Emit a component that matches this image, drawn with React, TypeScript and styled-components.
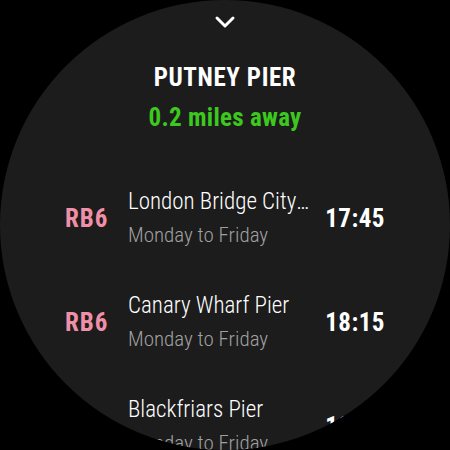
import styled, { createGlobalStyle } from 'styled-components';

const GlobalStyle = createGlobalStyle`
  html, body {
    margin: 0;
    padding: 0;
    background: #000;
  }
  body {
    font-family: "Roboto Condensed", "Liberation Sans Narrow", Roboto, sans-serif;
  }
`;

const Screen = styled.div`
  width: 450px;
  height: 450px;
  border-radius: 50%;
  background: #1c1c1c;
  overflow: hidden;
  display: flex;
  flex-direction: column;
  align-items: center;
`;

const Chevron = styled.div`
  margin-top: 15px;
  height: 18px;
  display: flex;
  justify-content: center;
  svg {
    width: 22px;
    height: 14px;
  }
`;

const Header = styled.div`
  margin-top: 34px;
  display: flex;
  flex-direction: column;
  align-items: center;
  gap: 10px;
`;

const Title = styled.h1`
  margin: 0;
  font-size: 25px;
  font-weight: 700;
  letter-spacing: 0.6px;
  color: #fff;
  line-height: 30px;
`;

const Distance = styled.div`
  font-size: 25px;
  font-weight: 700;
  letter-spacing: 0.3px;
  color: #3cc81e;
  line-height: 30px;
`;

const List = styled.div`
  margin-top: 53px;
  width: 320px;
  display: flex;
  flex-direction: column;
  gap: 40px;
`;

const Row = styled.div`
  display: grid;
  grid-template-columns: 63px 1fr auto;
  align-items: center;
  height: 64px;
`;

const Code = styled.span`
  font-size: 25px;
  font-weight: 700;
  letter-spacing: 1px;
  color: #f08fa8;
`;

const Info = styled.div`
  display: flex;
  flex-direction: column;
  gap: 8px;
  min-width: 0;
  padding-right: 13px;
`;

const Name = styled.span`
  font-size: 23px;
  font-weight: 300;
  color: #fff;
  white-space: nowrap;
  overflow: hidden;
  text-overflow: ellipsis;
  line-height: 27px;
`;

const Days = styled.span`
  font-size: 21px;
  font-weight: 300;
  color: #a0a0a0;
  line-height: 25px;
`;

const Time = styled.span`
  font-size: 25px;
  font-weight: 700;
  letter-spacing: 0.5px;
  color: #fff;
`;

const departures = [
  { code: 'RB6', name: 'London Bridge City Pier', days: 'Monday to Friday', time: '17:45' },
  { code: 'RB6', name: 'Canary Wharf Pier', days: 'Monday to Friday', time: '18:15' },
  { code: 'RB6', name: 'Blackfriars Pier', days: 'Monday to Friday', time: '18:45' },
];

function App() {
  return (
    <>
      <GlobalStyle />
      <Screen>
        <Chevron>
          <svg viewBox="0 0 22 14" fill="none">
            <path d="M3 3l8 8 8-8" stroke="#fff" strokeWidth="3" strokeLinecap="round" strokeLinejoin="round" />
          </svg>
        </Chevron>
        <Header>
          <Title>PUTNEY PIER</Title>
          <Distance>0.2 miles away</Distance>
        </Header>
        <List>
          {departures.map((d, i) => (
            <Row key={i}>
              <Code>{d.code}</Code>
              <Info>
                <Name>{d.name}</Name>
                <Days>{d.days}</Days>
              </Info>
              <Time>{d.time}</Time>
            </Row>
          ))}
        </List>
      </Screen>
    </>
  );
}

export default App;
